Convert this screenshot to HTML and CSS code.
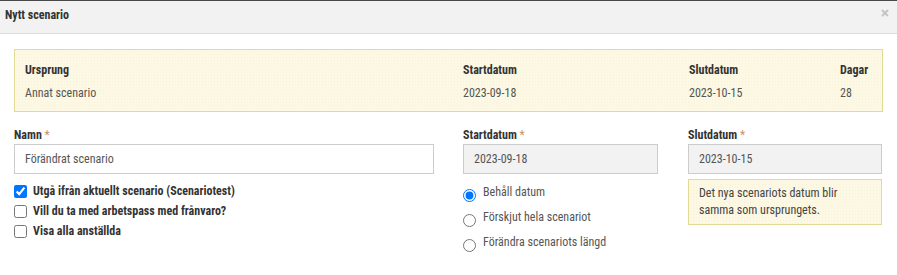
FILE: index.html
```html
<!DOCTYPE html>
<html lang="sv">
<head>
    <meta charset="UTF-8">
    <title>Nytt scenario</title>
    <link rel="stylesheet" href="styles.css">
</head>
<body>
    <div class="modal">
        <div class="modal-header">
            <h4 class="modal-title">Nytt scenario</h4>
            <button class="close" type="button">
                <svg width="8" height="8" viewBox="0 0 8 8"><path d="M1 1 L7 7 M7 1 L1 7" stroke="#c3c3c3" stroke-width="1.8"/></svg>
            </button>
        </div>
        <div class="modal-body">
            <div class="origin">
                <div class="origin-head">Ursprung</div>
                <div class="origin-head">Startdatum</div>
                <div class="origin-head">Slutdatum</div>
                <div class="origin-head">Dagar</div>
                <div>Annat scenario</div>
                <div>2023-09-18</div>
                <div>2023-10-15</div>
                <div>28</div>
            </div>

            <div class="form-grid">
                <div class="field">
                    <label class="field-label">Namn <span class="req">*</span></label>
                    <input class="text-input" type="text" value="Förändrat scenario">
                    <div class="checks">
                        <label class="check"><input type="checkbox" checked> Utgå ifrån aktuellt scenario (Scenariotest)</label>
                        <label class="check"><input type="checkbox"> Vill du ta med arbetspass med frånvaro?</label>
                        <label class="check"><input type="checkbox"> Visa alla anställda</label>
                    </div>
                </div>
                <div class="field">
                    <label class="field-label">Startdatum <span class="req">*</span></label>
                    <input class="text-input" type="text" value="2023-09-18" disabled>
                    <div class="radios">
                        <label class="radio"><input type="radio" name="mode" checked> Behåll datum</label>
                        <label class="radio"><input type="radio" name="mode"> Förskjut hela scenariot</label>
                        <label class="radio"><input type="radio" name="mode"> Förändra scenariots längd</label>
                    </div>
                </div>
                <div class="field">
                    <label class="field-label">Slutdatum <span class="req">*</span></label>
                    <input class="text-input" type="text" value="2023-10-15" disabled>
                    <div class="note">Det nya scenariots datum blir samma som ursprungets.</div>
                </div>
            </div>
        </div>
    </div>
</body>
</html>
```
FILE: styles.css
```css
body {
    margin: 0;
    font-family: "Roboto Condensed", Roboto, sans-serif;
    font-stretch: condensed;
    font-size: 12px;
    color: #555;
    background-color: #fff;
}

.modal {
    border-top: 1px solid #4a4a4a;
}

.modal-header {
    display: flex;
    justify-content: space-between;
    align-items: flex-start;
    height: 33px;
    box-sizing: border-box;
    padding: 5px 8px 0 5px;
    background-color: #f2f2f2;
    border-bottom: 1px solid #dcdcdc;
}

.modal-title {
    margin: 0;
    font-size: 12px;
    line-height: 19px;
    font-weight: bold;
    color: #333;
}

.close {
    border: none;
    background: none;
    padding: 0;
    margin-top: 3px;
    width: 8px;
    height: 8px;
    cursor: pointer;
}

.close svg {
    display: block;
}

.modal-body {
    padding: 15px 14px 0 14px;
}

.origin {
    display: grid;
    grid-template-columns: 438px 226px 151px 1fr;
    grid-auto-rows: 23px;
    align-items: center;
    padding: 8px 10px 7px 10px;
    background-color: #fcf8e3;
    background-image: radial-gradient(rgba(200, 185, 130, 0.09) 0.6px, transparent 0.8px);
    background-size: 3px 3px;
    border: 1px solid #e3da93;
}

.origin-head {
    font-weight: bold;
    color: #333;
}

.form-grid {
    display: grid;
    grid-template-columns: 420px 195px 195px;
    column-gap: 29px;
    margin-top: 14px;
}

.form-grid .field:last-child {
    margin-left: 1px;
}

.field-label {
    display: block;
    line-height: 18px;
    margin-bottom: 0;
    font-weight: bold;
    color: #333;
}

.req {
    color: #c9945f;
    font-weight: normal;
}

.text-input {
    display: block;
    width: 100%;
    height: 30px;
    box-sizing: border-box;
    margin: 0;
    padding: 0 10px;
    border: 1px solid #ccc;
    font-family: inherit;
    font-stretch: condensed;
    font-size: 12px;
    color: #555;
    background-color: #fff;
    outline: none;
}

.text-input:disabled {
    background-color: #f2f2f2;
    color: #555;
}

.checks {
    margin-top: 7px;
}

.check {
    display: flex;
    align-items: center;
    height: 20px;
    font-weight: bold;
    color: #333;
}

.check input {
    width: 13px;
    height: 13px;
    margin: 0 6px 0 0;
}

.radios {
    margin-top: 6px;
}

.radio {
    display: flex;
    align-items: flex-start;
    line-height: 25px;
    color: #555;
}

.radio input {
    width: 13px;
    height: 13px;
    margin: 9px 7px 0 0;
}

.note {
    margin-top: 5px;
    padding: 5px 10px;
    line-height: 17px;
    color: #444;
    background-color: #fcf8e3;
    background-image: radial-gradient(rgba(200, 185, 130, 0.09) 0.6px, transparent 0.8px);
    background-size: 3px 3px;
    border: 1px solid #e3da93;
}
```
